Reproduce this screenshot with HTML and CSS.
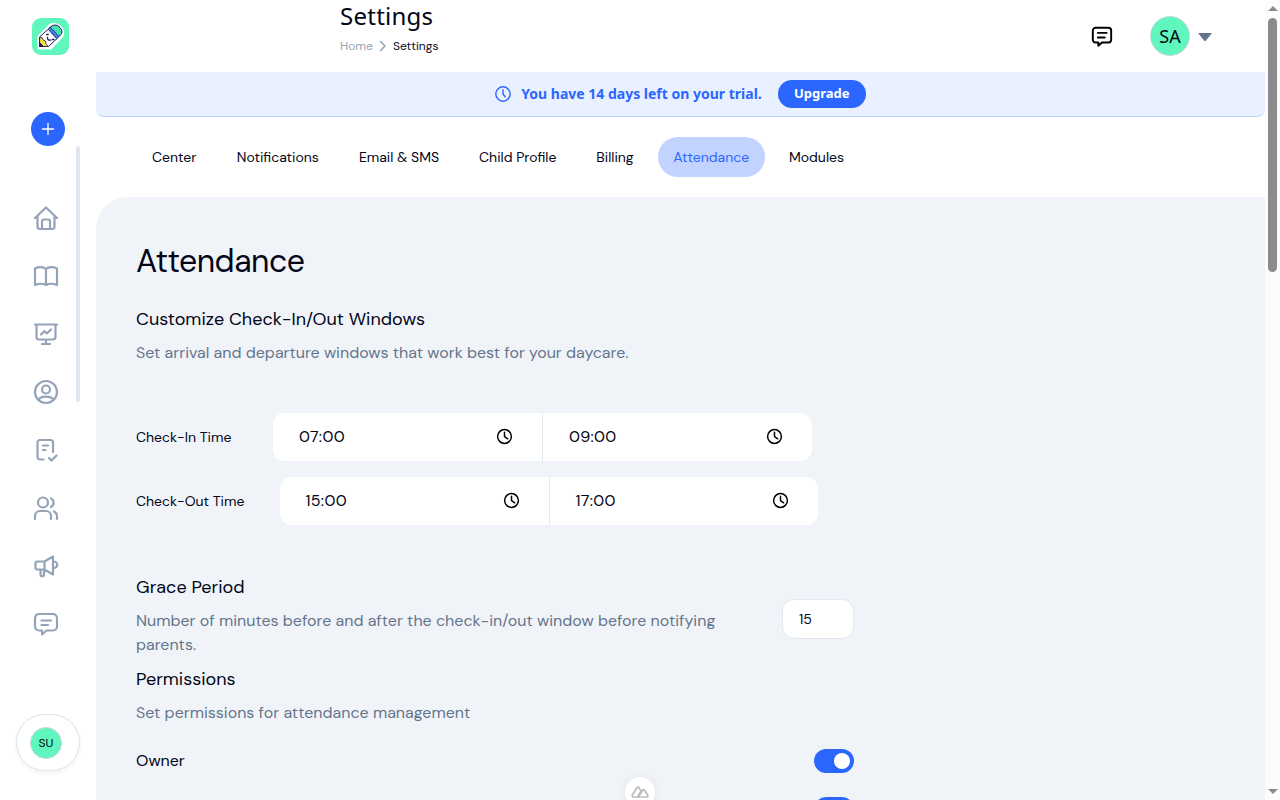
FILE: index.html
```html
<!DOCTYPE html>
<html lang="en">
<head>
    <meta charset="UTF-8">
    <title>Settings</title>
    <link rel="stylesheet" href="styles.css">
</head>
<body>
<div class="app">
    <aside class="sidebar">
        <svg class="logo" viewBox="0 0 37 37">
            <rect width="37" height="37" rx="9" fill="#5ff7bd"/>
            <path d="M7 18.500 18 7.500Q22 4.500 27 8.500T30 18L18.500 30H7Z" fill="#fff" stroke="#fff" stroke-width="3"/>
            <path d="M8 18.500 16.500 11 25 20.500 16.500 28.500 8 28.500Z" fill="#fff" stroke="#1b1b5e" stroke-width="1"/>
            <path d="M8 19.500 10 19.500 11 22 13.500 23 14 26 16.500 28.500H8Z" fill="#f7e135" stroke="#1b1b5e" stroke-width=".8"/>
            <path d="M8 25 11.500 28.500H8Z" fill="#1b1b5e" stroke="#1b1b5e"/>
            <path d="M19 8.500Q24 5 28 9.500T28 17.500L26.500 19 17.500 10Z" fill="#45dfb5" stroke="#1b1b5e" stroke-width="1"/>
            <path d="M16.500 11 18.500 9.500 27 18.500 25 20.500Z" fill="#4385f5" stroke="#1b1b5e" stroke-width=".8"/>
            <path d="M15.500 19.500q0 3.500 3.500 2.500M14.700 16.500h1.500M20.500 21.500h1.500" fill="none" stroke="#1b1b5e" stroke-width="1.300"/>
        </svg>
        <button class="add-btn">
            <svg viewBox="0 0 12 12" width="12" height="12"><path d="M6 .5v11M.5 6h11"/></svg>
        </button>
        <div class="nav-scroll">
            <nav class="nav">
                <svg viewBox="0 0 24 24"><path d="M1 12 12 1.500 23 12M3.500 10v10.500a2.500 2.500 0 0 0 2.500 2.500h12a2.500 2.500 0 0 0 2.500-2.500V10M8 23v-7.500a2 2 0 0 1 2-2h4a2 2 0 0 1 2 2V23"/></svg>
                <svg viewBox="0 0 24 24"><path d="M12 5v16M12 5C9.500 2.700 4.500 2.700 1 4.500V21c3.500-1.500 8.500-1.500 11 0 2.500-1.500 7.500-1.500 11 0V4.500C19.500 2.700 14.500 2.700 12 5Z"/></svg>
                <svg viewBox="0 0 24 24"><path d="M1 2.500h22M2.500 2.500v12.500A2.500 2.500 0 0 0 5 17.500h14a2.500 2.500 0 0 0 2.500-2.500V2.500M12 17.500v4.500M8 22h8M7 12.500l3.200-3.300 2.600 2.200L17 7.500"/></svg>
                <svg viewBox="0 0 24 24"><circle cx="12" cy="12" r="11"/><circle cx="12" cy="9.500" r="4"/><path d="M4.500 20c2-4.500 13-4.500 15 0"/></svg>
                <svg viewBox="0 0 24 24"><path d="M9.500 21.500H6A2.500 2.500 0 0 1 3.500 19V4.500A2.500 2.500 0 0 1 6 2h10.500A2.500 2.500 0 0 1 19 4.500V14M9 7.500h5M9 12h2.500M15 20l2.500 2.500 5-5"/></svg>
                <svg viewBox="0 0 24 24"><circle cx="9" cy="6.500" r="5"/><path d="M1 23v-3a5 5 0 0 1 5-5h6a5 5 0 0 1 5 5v3M17 2.500a4.800 4.800 0 0 1 0 8.500M20 15.500a5 5 0 0 1 3 4.500v3"/></svg>
                <svg viewBox="0 0 24 24"><path d="M10.500 7.500H3A1.500 1.500 0 0 0 1.500 9v5A1.500 1.500 0 0 0 3 15.500h7.500M10.500 7.500v8l8.500 5V2.500Zm8.500 0h1a3.200 3.200 0 0 1 0 6.500h-1M6.500 15.500v5a1.700 1.700 0 0 0 3.500 0v-5"/></svg>
                <svg viewBox="0 0 24 24"><path d="M5 2h14a4 4 0 0 1 4 4v8.500a4 4 0 0 1-4 4h-6.500L8 22.500v-4H5a4 4 0 0 1-4-4V6a4 4 0 0 1 4-4ZM7.500 8.500h9.500M7.500 13h6.500"/></svg>
            </nav>
            <div class="nav-thumb"></div>
        </div>
        <div class="user-pill"><span class="user-badge">SU</span></div>
    </aside>

    <div class="main">
        <header class="header">
            <div>
                <div class="header-title">Settings</div>
                <div class="breadcrumb">
                    <span class="crumb-home">Home</span>
                    <svg viewBox="0 0 8 10" width="8" height="10"><path d="M1.500.5 6 5 1.500 9.500"/></svg>
                    <span>Settings</span>
                </div>
            </div>
            <div class="header-actions">
                <svg class="chat" viewBox="0 0 24 24"><path d="M5 2h14a3 3 0 0 1 3 3v10a3 3 0 0 1-3 3h-7l-4 3.500V18H5a3 3 0 0 1-3-3V5a3 3 0 0 1 3-3ZM7.500 7.500h9.500M7.500 12.500h7.500"/></svg>
                <span class="avatar">SA</span>
                <svg class="caret" viewBox="0 0 14 8"><path d="M0 0h14L8 7.500q-1 1-2 0Z"/></svg>
            </div>
        </header>

        <div class="trial">
            <svg viewBox="0 0 16 16" width="16" height="16"><circle cx="8" cy="8" r="7.200"/><path d="M8 3.800V8l2.200 2.700"/></svg>
            <span class="trial-text">You have 14 days left on your trial.</span>
            <button class="upgrade">Upgrade</button>
        </div>

        <nav class="tabs">
            <a class="tab">Center</a>
            <a class="tab">Notifications</a>
            <a class="tab">Email &amp; SMS</a>
            <a class="tab">Child Profile</a>
            <a class="tab">Billing</a>
            <a class="tab active">Attendance</a>
            <a class="tab">Modules</a>
        </nav>

        <main class="panel">
            <h1>Attendance</h1>
            <h2>Customize Check-In/Out Windows</h2>
            <p class="desc">Set arrival and departure windows that work best for your daycare.</p>

            <div class="times">
                <div class="time-row">
                    <label class="label-in">Check-In Time</label>
                    <div class="time-group">
                        <div class="time"><span>07:00</span><svg viewBox="0 0 16 16"><circle cx="8" cy="8" r="6.500"/><path d="M8 4v4.200l3 2"/></svg></div>
                        <div class="time"><span>09:00</span><svg viewBox="0 0 16 16"><circle cx="8" cy="8" r="6.500"/><path d="M8 4v4.200l3 2"/></svg></div>
                    </div>
                </div>
                <div class="time-row">
                    <label class="label-out">Check-Out Time</label>
                    <div class="time-group">
                        <div class="time"><span>15:00</span><svg viewBox="0 0 16 16"><circle cx="8" cy="8" r="6.500"/><path d="M8 4v4.200l3 2"/></svg></div>
                        <div class="time"><span>17:00</span><svg viewBox="0 0 16 16"><circle cx="8" cy="8" r="6.500"/><path d="M8 4v4.200l3 2"/></svg></div>
                    </div>
                </div>
            </div>

            <div class="grace">
                <div class="grace-text">
                    <h2>Grace Period</h2>
                    <p class="desc">Number of minutes before and after the check-in/out window before notifying parents.</p>
                </div>
                <div class="minutes">15</div>
            </div>

            <h2>Permissions</h2>
            <p class="desc">Set permissions for attendance management</p>
            <div class="permissions">
                <div class="permission"><span>Owner</span><i class="toggle"></i></div>
                <div class="permission"><i class="toggle"></i></div>
            </div>
        </main>
    </div>

    <div class="scrollbar">
        <i class="arrow-up"></i>
        <i class="scroll-thumb"></i>
        <i class="arrow-down"></i>
    </div>
</div>

<div class="devtools">
    <svg viewBox="0 0 18 12" width="18" height="12"><path d="M9 11H2L1 9.500 6.500 1h1L10 5 6.500 11M10.500 11H16.500L17 9.500 13 3.500h-1L8.500 9.500"/></svg>
</div>
</body>
</html>
```
FILE: styles.css
```css
* {
    margin: 0;
    padding: 0;
    box-sizing: border-box;
}
body {
    height: 100vh;
    overflow: hidden;
    background: #fff;
    color: #020617;
    font-family: "DM Sans", Inter, sans-serif;
    font-size: 16px;
}
svg {
    display: block;
    flex: none;
    overflow: visible;
    fill: none;
    stroke-linecap: round;
    stroke-linejoin: round;
}
button {
    border: 0;
    font: inherit;
}
.app {
    display: grid;
    grid-template-columns: 96px 1fr 15px;
    height: 800px;
}

/* sidebar */
.sidebar {
    display: flex;
    flex-direction: column;
    height: 800px;
    padding: 18px 16px 0;
}
.logo {
    width: 37px;
    height: 37px;
    margin-left: 16px;
}
.add-btn {
    display: flex;
    align-items: center;
    justify-content: center;
    width: 34px;
    height: 34px;
    margin: 57px 0 0 15px;
    border-radius: 50%;
    background: #2b67ff;
}
.add-btn svg {
    stroke: #fff;
    stroke-width: 1.3;
}
.nav-scroll {
    display: flex;
    justify-content: space-between;
    height: 568px;
}
.nav {
    display: flex;
    flex-direction: column;
    gap: 34px;
    padding: 60px 0 0 18px;
}
.nav svg {
    width: 24px;
    height: 24px;
    stroke: #94a3b8;
    stroke-width: 2.2;
}
.nav-thumb {
    width: 4px;
    height: 256px;
    border-radius: 2px;
    background: #e0e7ef;
}
.user-pill {
    display: flex;
    align-items: center;
    width: 64px;
    height: 57px;
    padding-left: 13px;
    border: 1px solid #dbe1ee;
    border-radius: 29px;
    box-shadow: 0 2px 4px rgba(15, 23, 42, .05);
}
.user-badge {
    width: 32px;
    height: 32px;
    border: 1px solid #cbd5e1;
    border-radius: 50%;
    background: #5ff7bd;
    font-size: 12px;
    line-height: 30px;
    text-align: center;
}

/* header */
.main {
    display: flex;
    flex-direction: column;
    height: 800px;
    overflow: hidden;
}
.header {
    display: flex;
    flex: none;
    justify-content: space-between;
    height: 72px;
    padding: 0 53px 0 244px;
}
.header-title {
    font-family: "Noto Sans", sans-serif;
    font-size: 24px;
    letter-spacing: .25px;
    line-height: 32px;
}
.breadcrumb {
    display: flex;
    align-items: center;
    gap: 6px;
    height: 28px;
    font-size: 12px;
}
.breadcrumb svg {
    stroke: #94a3b8;
    stroke-width: 1.5;
}
.crumb-home {
    width: 33px;
    color: #94a3b8;
}
.header-actions {
    display: flex;
    align-items: center;
}
.chat {
    width: 22px;
    height: 22px;
    margin: 2px 37px 0 0;
    stroke: #000;
    stroke-width: 2.1;
}
.avatar {
    width: 40px;
    height: 40px;
    border: 1px solid #cbd5e1;
    border-radius: 50%;
    background: #5ff7bd;
    font: 18px/38px "Noto Sans", sans-serif;
    text-align: center;
}
.caret {
    width: 14px;
    height: 8px;
    margin: 2px 0 0 8px;
    fill: #64748b;
}

/* trial banner */
.trial {
    display: flex;
    flex: none;
    align-items: center;
    justify-content: center;
    height: 45px;
    border-bottom: 1px solid #c1d2fd;
    border-radius: 0 0 8px 8px;
    background: #e9f0ff;
    color: #2b67ff;
    font-family: "Noto Sans", sans-serif;
    font-weight: 700;
}
.trial svg {
    stroke: #2b67ff;
    stroke-width: 1.4;
}
.trial-text {
    margin: 0 16px 0 10px;
    font-size: 14px;
    line-height: 20px;
}
.upgrade {
    width: 88px;
    height: 28px;
    border-radius: 14px;
    background: #2b67ff;
    color: #fff;
    font-size: 13px;
    line-height: 20px;
    padding-bottom: 2px;
}

/* tabs */
.tabs {
    display: grid;
    flex: none;
    grid-template-columns: 76.5px 114.5px 112px 109.5px 69px 107.500px 87px;
    gap: 8px;
    height: 80px;
    padding: 20px 40px;
}
.tab {
    border-radius: 20px;
    font-size: 14px;
    line-height: 40px;
    text-align: center;
    white-space: nowrap;
}
.tab.active {
    background: #c3d3ff;
    color: #2b67ff;
}

/* content */
.panel {
    flex: 1;
    padding: 40px;
    border-radius: 32px 0 0 0;
    background: #f0f4f9;
}
h1 {
    font-size: 32px;
    font-weight: 400;
    letter-spacing: -.5px;
    line-height: 48px;
}
h2 {
    font-size: 18px;
    font-weight: 400;
    line-height: 28px;
}
h1 + h2 {
    margin-top: 20px;
}
.desc {
    margin-top: 8px;
    color: #64748b;
    line-height: 24px;
}
.times {
    display: flex;
    flex-direction: column;
    gap: 16px;
    margin-top: 48px;
}
.time-row {
    display: flex;
    align-items: center;
    height: 48px;
}
.time-row label {
    font-size: 14px;
}
.label-in {
    width: 137px;
}
.label-out {
    width: 143.5px;
}
.time-group {
    display: grid;
    grid-template-columns: 270px 268.5px;
    height: 48px;
    overflow: hidden;
    border-radius: 12px;
    background: #fff;
}
.time {
    display: flex;
    align-items: center;
    justify-content: space-between;
    padding: 0 29px 0 26px;
}
.time span {
    padding-bottom: 2px;
    letter-spacing: .3px;
}
.time:first-child {
    border-right: 1px solid #e2e8f0;
}
.time svg {
    width: 17px;
    height: 17px;
    margin-top: -1px;
    stroke: #000;
    stroke-width: 1.4;
}
.grace {
    display: flex;
    justify-content: space-between;
    width: 718px;
    margin-top: 48px;
}
.grace-text {
    width: 610px;
    height: 92px;
}
.minutes {
    width: 72px;
    height: 40px;
    margin-top: 26px;
    padding-left: 16px;
    border: 1px solid #e2e8f0;
    border-radius: 12px;
    background: #fff;
    font-size: 14px;
    line-height: 38px;
}
.permissions {
    display: flex;
    flex-direction: column;
    gap: 24px;
    width: 718px;
    margin-top: 24px;
}
.permission {
    display: flex;
    align-items: center;
    justify-content: space-between;
    height: 24px;
    line-height: 24px;
}
.toggle {
    display: flex;
    justify-content: flex-end;
    width: 40px;
    height: 24px;
    margin-left: auto;
    padding: 4px;
    border-radius: 12px;
    background: #2b67ff;
}
.toggle::after {
    content: "";
    width: 16px;
    height: 16px;
    border-radius: 50%;
    background: #fff;
}

/* page scrollbar */
.scrollbar {
    display: flex;
    flex-direction: column;
    align-items: center;
    padding: 6px 0;
    background: #fcfcfc;
}
.arrow-up,
.arrow-down {
    border: 5px solid transparent;
}
.arrow-up {
    border-top: 0;
    border-bottom: 5px solid #8b8b8b;
}
.arrow-down {
    margin-top: auto;
    border-bottom: 0;
    border-top: 5px solid #8b8b8b;
}
.scroll-thumb {
    width: 9px;
    height: 254px;
    margin-top: 7px;
    border-radius: 5px;
    background: #8b8b8b;
}

/* floating devtools button */
.devtools {
    position: fixed;
    bottom: -7px;
    left: 625px;
    width: 30px;
    height: 30px;
    padding: 9px 6px;
    border-radius: 50%;
    background: #fff;
    box-shadow: 0 1px 8px rgba(0, 0, 0, .08);
}
.devtools svg {
    stroke: #bbb;
    stroke-width: 1.6;
}
```
